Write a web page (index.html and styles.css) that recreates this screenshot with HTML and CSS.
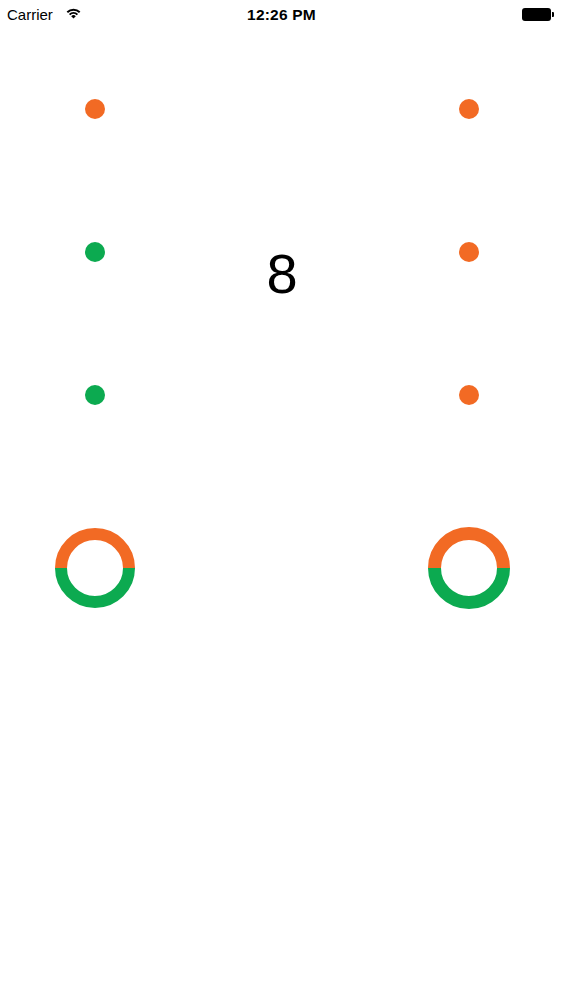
FILE: index.html
```html
<!DOCTYPE html>
<html>
<head>
<meta charset="utf-8">
<link rel="stylesheet" href="styles.css">
</head>
<body>
<div class="status">
  <div class="left">
    <span class="carrier">Carrier</span>
    <svg class="wifi" width="15" height="11" viewBox="0 0 15 11">
      <path d="M0.6 3.6 A10 10 0 0 1 14.4 3.6 L13 5 A8 8 0 0 0 2 5 Z" fill="#000"/>
      <path d="M2.9 5.9 A6.8 6.8 0 0 1 12.1 5.9 L10.7 7.3 A4.8 4.8 0 0 0 4.3 7.3 Z" fill="#000"/>
      <path d="M5.2 8.2 A3.3 3.3 0 0 1 9.8 8.2 L7.5 10.6 Z" fill="#000"/>
    </svg>
  </div>
  <div class="time">12:26 PM</div>
  <div class="right">
    <div class="battery"></div>
    <div class="nub"></div>
  </div>
</div>
<div class="board">
  <div class="cell"><span class="dot orange"></span></div>
  <div class="cell"></div>
  <div class="cell"><span class="dot orange"></span></div>

  <div class="cell"><span class="dot green"></span></div>
  <div class="cell count-cell"><span class="count">8</span></div>
  <div class="cell"><span class="dot orange"></span></div>

  <div class="cell"><span class="dot green"></span></div>
  <div class="cell"></div>
  <div class="cell"><span class="dot orange"></span></div>

  <div class="cell ring-cell">
    <svg width="80" height="80" viewBox="0 0 80 80">
      <path d="M6 40 A34 34 0 0 1 74 40" fill="none" stroke="#f26a24" stroke-width="12"/>
      <path d="M74 40 A34 34 0 0 1 6 40" fill="none" stroke="#0caa50" stroke-width="12"/>
    </svg>
  </div>
  <div class="cell ring-cell"></div>
  <div class="cell ring-cell">
    <svg width="82" height="82" viewBox="0 0 82 82">
      <path d="M6.5 41 A34.5 34.5 0 0 1 75.5 41" fill="none" stroke="#f26a24" stroke-width="13"/>
      <path d="M75.5 41 A34.5 34.5 0 0 1 6.5 41" fill="none" stroke="#0caa50" stroke-width="13"/>
    </svg>
  </div>
</div>
</body>
</html>
```

FILE: styles.css
```css
html, body {
  margin: 0;
  padding: 0;
  background: #fff;
}
body {
  width: 563px;
  height: 1000px;
  font-family: "Liberation Sans", Arial, sans-serif;
  color: #000;
  overflow: hidden;
}
.status {
  height: 30px;
  display: grid;
  grid-template-columns: 1fr auto 1fr;
  align-items: center;
}
.left {
  display: flex;
  align-items: center;
  padding-left: 7px;
  gap: 13px;
}
.carrier {
  font-size: 15px;
  line-height: 30px;
}
.wifi {
  display: block;
  margin-top: -3px;
}
.time {
  font-size: 15.5px;
  font-weight: bold;
  line-height: 30px;
  letter-spacing: 0.2px;
}
.right {
  display: flex;
  justify-content: flex-end;
  align-items: center;
  padding-right: 9px;
  margin-top: -2px;
}
.battery {
  width: 29px;
  height: 13px;
  background: #000;
  border-radius: 3px;
}
.nub {
  width: 2px;
  height: 5px;
  background: #000;
  border-radius: 0 1px 1px 0;
  margin-left: 1px;
}
.board {
  display: grid;
  grid-template-columns: 190px 184px 189px;
  grid-template-rows: 143px 143px 143px 203px;
  padding-top: 7px;
}
.cell {
  display: flex;
  align-items: center;
  justify-content: center;
}
.dot {
  display: block;
  width: 20px;
  height: 20px;
  border-radius: 50%;
}
.orange { background: #f26a24; }
.green { background: #0caa50; }
.count-cell {
  align-items: flex-start;
}
.count {
  display: block;
  margin-top: 65.5px;
  font-size: 56px;
  line-height: 56px;
}
.ring-cell svg {
  display: block;
}
```
